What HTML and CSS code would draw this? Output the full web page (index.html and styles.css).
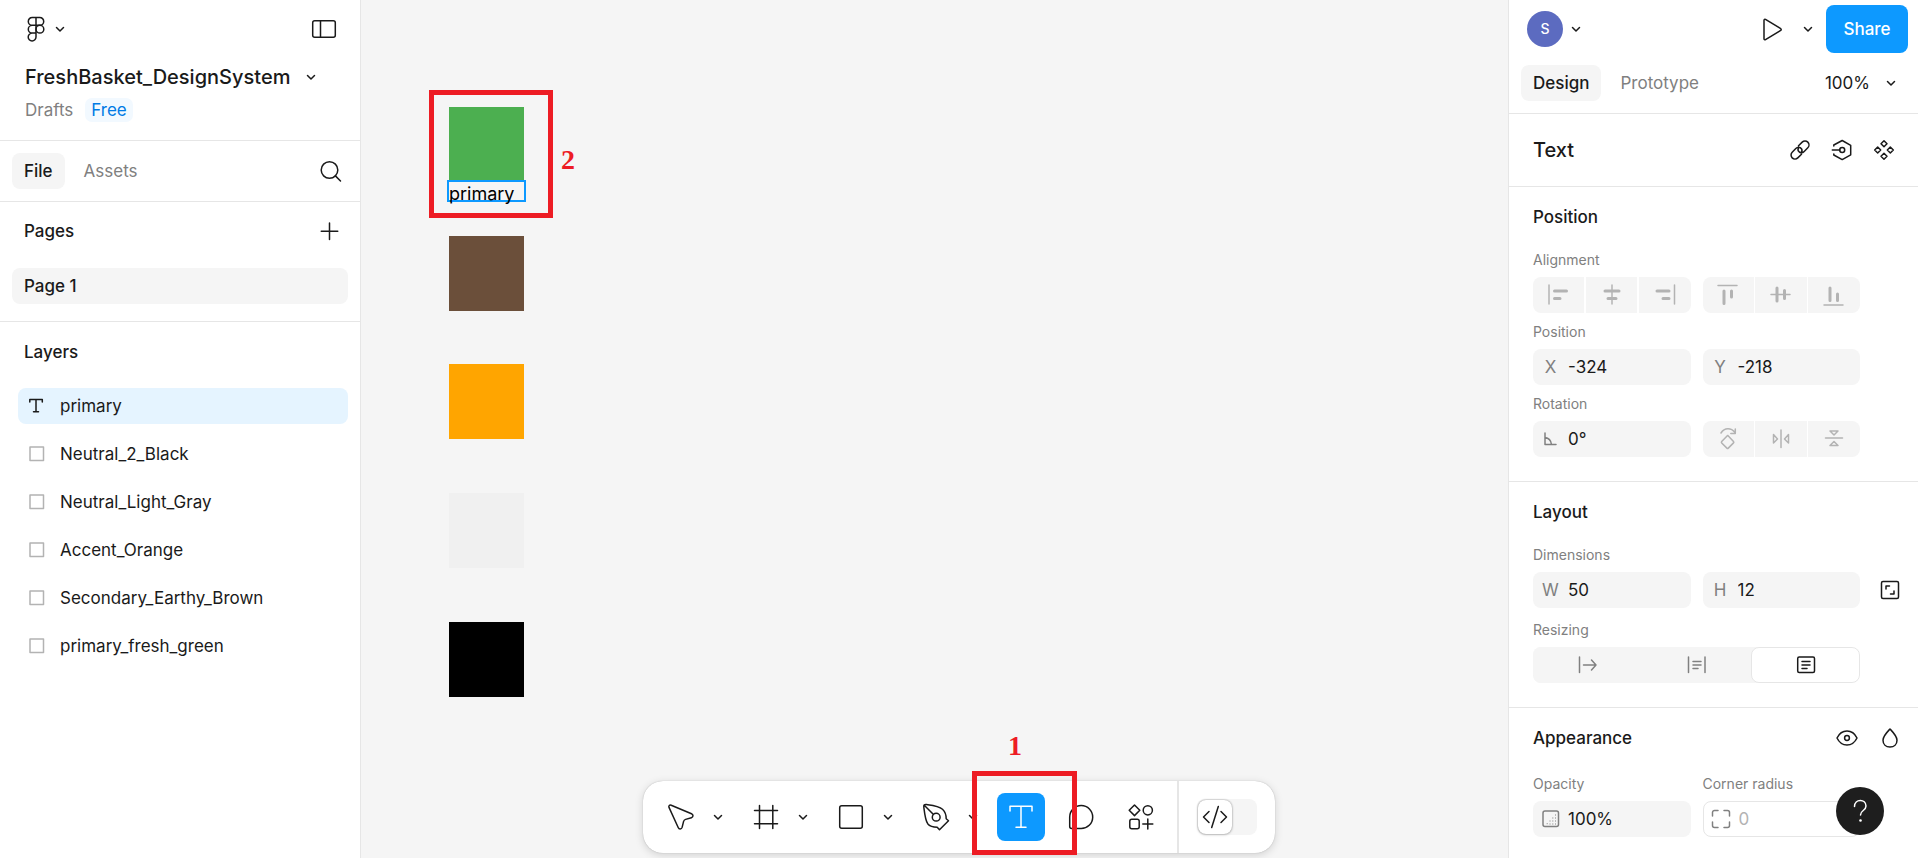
FILE: index.html
```html
<!DOCTYPE html>
<html lang="en">
<head>
<meta charset="utf-8">
<title>FreshBasket_DesignSystem</title>
<link rel="stylesheet" href="styles.css">
</head>
<body>
<svg class="defs" aria-hidden="true">
  <symbol id="chevron" viewBox="0 0 12 12"><path d="M2.5 4.5 6 8l3.500-3.500"/></symbol>
  <symbol id="square" viewBox="0 0 16 16"><rect x="1" y="1" width="13.500" height="13.500"/></symbol>
</svg>
<div class="app">
  <aside class="left">
    <header class="file-head">
      <div class="row top">
        <button class="plain menu" aria-label="Main menu">
          <svg class="icon i28" viewBox="0 0 28 28"><path d="M14 2.500h-3.800a3.900 3.900 0 0 0 0 7.800H14zM14 2.500h3.800a3.900 3.900 0 0 1 0 7.800H14zM14 10.300h-3.800a3.900 3.900 0 0 0 0 7.800H14zM14 18.100h-3.800a3.900 3.900 0 1 0 3.800 3.900z"/><circle cx="17.900" cy="14.200" r="3.900"/></svg>
          <svg class="icon i12"><use href="#chevron"/></svg>
        </button>
        <button class="plain" aria-label="Minimize UI">
          <svg class="icon i28" viewBox="0 0 28 28"><rect x="2.700" y="5.700" width="22.600" height="16.600" rx="2"/><path d="M10.500 5.700v16.600"/></svg>
        </button>
      </div>
      <button class="plain title"><span>FreshBasket_DesignSystem</span><svg class="icon i12"><use href="#chevron"/></svg></button>
      <div class="row crumbs"><a class="muted" href="#">Drafts</a><a class="free" href="#">Free</a></div>
    </header>
    <nav class="row tabs">
      <button class="tab on">File</button><button class="tab">Assets</button>
      <button class="plain end" aria-label="Find"><svg class="icon i28" viewBox="0 0 28 28"><circle cx="12.500" cy="13" r="8.300"/><path d="m18.400 18.900 5.100 5.100"/></svg></button>
    </nav>
    <section class="pages">
      <div class="row pages-head"><h2>Pages</h2><button class="plain end" aria-label="Add page"><svg class="icon i28" viewBox="0 0 28 28"><path d="M12.500 6v16.500M4.250 14.250h16.500"/></svg></button></div>
      <button class="page">Page 1</button>
    </section>
    <section class="layers">
      <h2>Layers</h2>
      <ul>
        <li><button class="layer on"><svg class="icon i16" viewBox="0 0 16 16"><path d="M.8 4V1.500h12.500V4M7 1.500v12.300M4.500 13.800h5"/></svg>primary</button></li>
        <li><button class="layer"><svg class="icon i16"><use href="#square"/></svg>Neutral_2_Black</button></li>
        <li><button class="layer"><svg class="icon i16"><use href="#square"/></svg>Neutral_Light_Gray</button></li>
        <li><button class="layer"><svg class="icon i16"><use href="#square"/></svg>Accent_Orange</button></li>
        <li><button class="layer"><svg class="icon i16"><use href="#square"/></svg>Secondary_Earthy_Brown</button></li>
        <li><button class="layer"><svg class="icon i16"><use href="#square"/></svg>primary_fresh_green</button></li>
      </ul>
    </section>
  </aside>

  <main class="canvas">
    <div class="swatch green"></div>
    <div class="swatch brown"></div>
    <div class="swatch orange"></div>
    <div class="swatch gray"></div>
    <div class="swatch black"></div>
    <div class="text-node">primary</div>
    <div class="mark mark-two"></div>
    <div class="num num-two">2</div>
  </main>

  <aside class="right">
    <header class="share-head">
      <div class="row share-row">
        <button class="plain user" aria-label="Account"><span class="avatar">S</span><svg class="icon i12"><use href="#chevron"/></svg></button>
        <button class="plain play" aria-label="Present"><svg class="icon i28" viewBox="0 0 28 28"><path d="M6 5.200v18.600c0 .8.800 1.300 1.500.9l15.200-9.300c.7-.4.7-1.400 0-1.800L7.500 4.300c-.7-.4-1.500.1-1.500.9z"/></svg></button>
        <button class="plain present-menu" aria-label="Present options"><svg class="icon i12"><use href="#chevron"/></svg></button>
        <button class="share">Share</button>
      </div>
      <div class="row mode-row">
        <button class="tab on">Design</button><button class="tab">Prototype</button>
        <button class="plain zoom end">100%<svg class="icon i12"><use href="#chevron"/></svg></button>
      </div>
    </header>
    <div class="row kind">
      <h1>Text</h1>
      <button class="plain end" aria-label="Link"><svg class="icon i24" viewBox="0 0 24 24"><path d="m10.500 7.700 3.700-3.600a3.900 3.900 0 0 1 5.600 5.600l-3.600 3.700a3.900 3.900 0 0 1-4.900.6M13.500 16.300l-3.700 3.600a3.900 3.900 0 0 1-5.600-5.600l3.600-3.700a3.900 3.900 0 0 1 4.900-.6M12.700 10c1.300 1 1.600 2.700.8 4.100M11.300 14c-1.300-1-1.600-2.700-.8-4.100"/></svg></button>
      <button class="plain" aria-label="Apply variable mode"><svg class="icon i24" viewBox="0 0 24 24"><path d="M3.800 8V7L12.200 2.500l8.500 4.800v9.500l-8.500 4.800L3.800 17v-1M2.300 12h7.500"/><circle cx="12.200" cy="12" r="2.500"/></svg></button>
      <button class="plain" aria-label="Create component"><svg class="icon i24" viewBox="0 0 24 24"><path d="m12 2.700 3 3-3 3-3-3zM12 15.300l3 3-3 3-3-3zM5.700 9l3 3-3 3-3-3zM18.300 9l3 3-3 3-3-3z"/></svg></button>
    </div>

    <section class="panel">
      <h2>Position</h2>
      <div class="grid">
        <div class="field wide"><span class="cap">Alignment</span>
          <div class="pair">
            <div class="seg spaced">
              <button aria-label="Align left"><svg class="icon i24" viewBox="0 0 24 24"><path d="M2 2v19"/><path class="fat" d="M7.500 8h12M7.500 15.500H13"/></svg></button>
              <button aria-label="Align horizontal centers"><svg class="icon i24" viewBox="0 0 24 24"><path d="M12 2v19"/><path class="fat" d="M5 8h14M8 15.500h8"/></svg></button>
              <button aria-label="Align right"><svg class="icon i24" viewBox="0 0 24 24"><path d="M21.500 2v19"/><path class="fat" d="M4 8h12M10 15.500h6"/></svg></button>
            </div>
            <div class="seg">
              <button aria-label="Align top"><svg class="icon i24" viewBox="0 0 24 24"><path d="M2 2.500h19"/><path class="fat" d="M8 8v12.500M15.500 8v6"/></svg></button>
              <button aria-label="Align vertical centers"><svg class="icon i24" viewBox="0 0 24 24"><path d="M2 11.500h19"/><path class="fat" d="M8 5v13M15.500 7.500v8"/></svg></button>
              <button aria-label="Align bottom"><svg class="icon i24" viewBox="0 0 24 24"><path d="M2 22h19"/><path class="fat" d="M8 5v12.500M15.500 11v6.500"/></svg></button>
            </div>
          </div>
        </div>
        <div class="field wide"><span class="cap">Position</span>
          <div class="pair">
            <label class="input"><span>X</span><input type="text" value="-324"></label>
            <label class="input"><span>Y</span><input type="text" value="-218"></label>
          </div>
        </div>
        <div class="field wide"><span class="cap">Rotation</span>
          <div class="pair">
            <label class="input"><span><svg class="icon i16" viewBox="0 0 16 16"><path d="M2 2v11.500h11M2 6.500c4 .5 6 3 6.500 7"/></svg></span><input type="text" value="0°" aria-label="Rotation"></label>
            <div class="seg">
              <button aria-label="Rotate 90° right"><svg class="icon i24" viewBox="0 0 24 24"><path d="m11.300 8.700-5.600 5.800a1 1 0 0 0 0 1.400l5.200 5.200a1 1 0 0 0 1.400 0l5.200-5.200a1 1 0 0 0 0-1.400l-5.200-5.600a.7.700 0 0 0-1-.2zM5 6c3.500-5.500 10-5.500 14-.5M19.300 2v4.500h-4.500"/></svg></button>
              <button aria-label="Flip horizontal"><svg class="icon i24" viewBox="0 0 24 24"><path d="M12 3v17.500M4.500 7.500v8.500L8.500 12zM19.500 7.500v8.500l-4-4z"/></svg></button>
              <button aria-label="Flip vertical"><svg class="icon i24" viewBox="0 0 24 24"><path d="M3.500 11h17M8 4h8l-4 4zM8 18.500h8l-4-4z"/></svg></button>
            </div>
          </div>
        </div>
      </div>
    </section>

    <section class="panel">
      <h2>Layout</h2>
      <div class="grid roomy">
        <div class="field wide"><span class="cap">Dimensions</span>
          <div class="pair">
            <label class="input"><span>W</span><input type="text" value="50"></label>
            <label class="input"><span>H</span><input type="text" value="12"></label>
          </div>
        </div>
        <button class="plain side" aria-label="Lock aspect ratio"><svg class="icon i24" viewBox="0 0 24 24"><rect x="3.500" y="3.500" width="17" height="17" rx="1.500"/><path d="M8 11V8h3.500M16 13v3h-3.500"/></svg></button>
        <div class="field wide"><span class="cap">Resizing</span>
          <div class="resize">
            <button aria-label="Auto width"><svg class="icon i24" viewBox="0 0 24 24"><path d="M3.500 4v15.500M7.500 12H20M15.500 7l4.500 5-4.500 5"/></svg></button>
            <button aria-label="Auto height"><svg class="icon i24" viewBox="0 0 24 24"><path d="M3.500 4v15.500M20 4v15.500M8 8.500h8M8 12h8M8 15.500h5"/></svg></button>
            <button class="on" aria-label="Fixed size"><svg class="icon i24" viewBox="0 0 24 24"><rect x="3.700" y="4" width="16.800" height="15.500" rx="1.500"/><path d="M8 8.500h8M8 12h8M8 15.500h5"/></svg></button>
          </div>
        </div>
      </div>
    </section>

    <section class="panel last">
      <div class="row panel-head"><h2>Appearance</h2>
        <button class="plain end" aria-label="Toggle visibility"><svg class="icon i24" viewBox="0 0 24 24"><path d="M2 12c4.500-9.300 15.500-9.300 20 0-4.500 9.300-15.500 9.300-20 0z"/><circle cx="12" cy="12" r="2.400"/></svg></button>
        <button class="plain" aria-label="Blend mode"><svg class="icon i24" viewBox="0 0 24 24"><path d="M12 3c3 3.200 7 7 7 11.200C19 18.500 16 21 12 21s-7-2.500-7-6.800C5 10 9 6.200 12 3z"/></svg></button>
      </div>
      <div class="grid">
        <div class="field"><label class="cap" for="opacity">Opacity</label>
          <div class="input"><span><svg class="icon i20" viewBox="0 0 20 20"><rect x="2" y="2" width="15.500" height="15.500" rx="2"/><path class="dots" d="M14.500 5.500v10M11.800 8.500v7M9 11.500v4M6.200 14.200v1.300"/></svg></span><input id="opacity" type="text" value="100%"></div>
        </div>
        <div class="field"><label class="cap" for="radius">Corner radius</label>
          <div class="input line"><span><svg class="icon i20" viewBox="0 0 20 20"><path d="M1.500 7V3.500a2 2 0 0 1 2-2H7M13 1.500h3.500a2 2 0 0 1 2 2V7M18.500 13v3.500a2 2 0 0 1-2 2H13M7 18.500H3.500a2 2 0 0 1-2-2V13"/></svg></span><input id="radius" type="text" value="0"></div>
        </div>
      </div>
    </section>
    <button class="help" aria-label="Help"><svg class="icon i24" viewBox="0 0 24 24"><path d="M6.500 7.500c0-8 11.500-8 11.500-.5 0 5-5.500 4-5.500 9"/><circle class="dot" cx="12.500" cy="21.500" r="1.300"/></svg></button>
  </aside>

  <div class="dock">
    <div class="toolbar">
      <button class="tool" aria-label="Move"><svg class="icon i28" viewBox="0 0 28 28"><path d="M2 4.400C1.400 2.800 2.600 1.600 4.200 2.200l20.300 8.600c2 .9 2 3.300-.1 3.900l-5.800 1.700c-1 .3-1.700 1-2 2l-1.500 6c-.6 2-3.100 2.100-3.900.1z"/></svg></button>
      <button class="drop" aria-label="Move options"><svg class="icon i12"><use href="#chevron"/></svg></button>
      <button class="tool" aria-label="Frame"><svg class="icon i28" viewBox="0 0 28 28"><path d="M7.500 2.500v23M20.800 2.500v23M2.500 7.500h23M2.500 20.800h23"/></svg></button>
      <button class="drop" aria-label="Frame options"><svg class="icon i12"><use href="#chevron"/></svg></button>
      <button class="tool" aria-label="Rectangle"><svg class="icon i28" viewBox="0 0 28 28"><rect x="2.700" y="2.700" width="22.600" height="22.600" rx="2"/></svg></button>
      <button class="drop" aria-label="Shape options"><svg class="icon i12"><use href="#chevron"/></svg></button>
      <button class="tool" aria-label="Pen"><svg class="icon i28" viewBox="0 0 28 28"><path d="M1.800 4C1.500 2 2.500 1.200 4.500 1.500 12 2.500 17 3 20.500 6.200c3.200 3 3.700 6 3.700 9.500l2.300 2-9 9-2.300-2.500c-4 0-7.200-.7-9.500-3.500C3.200 17 2.800 12 1.800 4zM3 3l8.500 8.500"/><circle cx="14.200" cy="14.200" r="3.900"/></svg></button>
      <button class="drop" aria-label="Pen options"><svg class="icon i12"><use href="#chevron"/></svg></button>
      <button class="tool on" aria-label="Text"><svg class="icon i28" viewBox="0 0 28 28"><path d="M3 8V3.300h22V8M14 3.300v20.900M9 24.200h10"/></svg></button>
      <button class="tool" aria-label="Comment"><svg class="icon i28" viewBox="0 0 28 28"><path d="M2.700 23.500V14A11.500 11.500 0 1 1 14 25.500H4.700a2 2 0 0 1-2-2z"/></svg></button>
      <button class="tool" aria-label="Actions"><svg class="icon i28" viewBox="0 0 28 28"><path d="m7.500 2 5.300 5.300-5.300 5.300-5.300-5.300zM20.800 16v10M15.800 21h10"/><circle cx="20.800" cy="7.300" r="4.600"/><rect x="2.800" y="16.300" width="9.400" height="9.400" rx="2"/></svg></button>
      <label class="dev"><input type="checkbox" aria-label="Dev Mode"><span class="knob"><svg class="icon i28" viewBox="0 0 28 28"><path d="M8 8.500 2.500 14 8 19.500M20 8.500l5.500 5.500-5.500 5.500M17.300 3.500l-6.600 21"/></svg></span></label>
    </div>
    <div class="mark mark-one"></div>
    <div class="num num-one">1</div>
  </div>
</div>
</body>
</html>
```
FILE: styles.css
```css
* { box-sizing: border-box; }

body {
  margin: 0;
  font: 400 17px/24px Inter, "Liberation Sans", sans-serif;
  color: #1a1a1a;
}

button, input { font: inherit; color: inherit; }
button { border: 0; padding: 0; background: none; }
a { text-decoration: none; }
ul { list-style: none; margin: 0; padding: 0; }
h1, h2 { margin: 0; font-weight: 500; }
h1 { font-size: 20px; }
h2 { font-size: 17px; }

.defs { position: absolute; width: 0; height: 0; }
.icon { display: block; flex: none; fill: none; stroke: currentColor; stroke-width: 1.500; stroke-linejoin: round; stroke-linecap: round; }
.i12 { width: 12px; height: 12px; }
.i16 { width: 16px; height: 16px; }
.i20 { width: 20px; height: 20px; }
.i24 { width: 24px; height: 24px; }
.i28 { width: 28px; height: 28px; }
.fat { stroke-width: 3; }
.dots { stroke-width: 1; stroke-dasharray: 1 2; stroke-linecap: butt; }

.row, .plain { display: flex; align-items: center; }
.end { margin-left: auto; }
.muted { color: #808080; }

.app {
  position: relative;
  display: grid;
  grid-template-columns: 361px 1fr 410px;
  grid-template-rows: 100vh;
  height: 100vh;
  overflow: hidden;
}

/* Left panel */
.left { border-right: 1px solid #e6e6e6; background: #fff; }
.file-head { height: 141px; padding: 8px 22px 0 25px; border-bottom: 1px solid #e6e6e6; }
.top { height: 42px; justify-content: space-between; }
.menu { gap: 4px; margin-left: -3px; }
.title { height: 54px; gap: 15px; font-size: 20px; font-weight: 500; margin-bottom: -6px; }
.crumbs { gap: 12px; }
.free { padding: 0 6px; border-radius: 7px; background: #f2f9ff; color: #007be5; }
.tabs { height: 61px; padding: 0 15px 0 12px; border-bottom: 1px solid #e6e6e6; }
.tab { height: 36px; padding: 0 12px; border-radius: 8px; color: #808080; }
.tab.on { background: #f5f5f5; color: #1a1a1a; font-weight: 500; }
.tab + .tab { margin-left: 7px; }
.pages { height: 120px; padding: 0 12px; border-bottom: 1px solid #e6e6e6; }
.pages-head { height: 58px; padding: 0 3px 0 12px; }
.page { width: 100%; height: 36px; margin-top: 8px; padding: 0 12px; border-radius: 8px; background: #f5f5f5; font-weight: 500; text-align: left; }
.layers { padding: 18px 12px 0 18px; }
.layers h2 { margin: 0 0 24px 6px; }
.layers ul { display: grid; gap: 12px; }
.layer { display: flex; align-items: center; gap: 15px; width: 100%; height: 36px; padding: 0 11px; border-radius: 8px; }
.layer .icon { color: #b3b3b3; }
.layer.on { background: #e5f4ff; }
.layer.on .icon { color: #1a1a1a; }

/* Canvas */
.canvas { position: relative; background: #f5f5f5; }
.swatch { position: absolute; left: 88px; width: 75px; height: 75px; }
.green { top: 107px; background: #4caf50; }
.brown { top: 236px; background: #6b4f3a; }
.orange { top: 364px; background: #ffa500; }
.gray { top: 493px; background: #f0f0f0; }
.black { top: 622px; background: #000; }
.text-node { position: absolute; left: 86px; top: 180px; width: 79px; height: 22px; border: 2px solid #0d99ff; font-size: 18px; line-height: 24px; color: #000; white-space: nowrap; }
.mark { position: absolute; border: 5px solid #ed1c24; }
.mark-two { left: 68px; top: 90px; width: 124px; height: 128px; }
.num { position: absolute; font: 700 28px/32px "Liberation Serif", serif; color: #ed1c24; }
.num-two { left: 200px; top: 144px; }

/* Toolbar */
.dock { position: absolute; left: 50%; bottom: 5px; transform: translateX(-50%); }
.toolbar { display: flex; align-items: center; width: max-content; height: 72px; padding: 0 18px 0 14px; border-radius: 20px; background: #fff; box-shadow: 0 0 1px rgba(0, 0, 0, .3), 0 2px 8px rgba(0, 0, 0, .15); }
.tool, .drop { display: grid; place-items: center; height: 48px; border-radius: 8px; }
.tool { width: 48px; margin-right: 12px; }
.drop { width: 25px; margin-left: -12px; margin-right: 12px; }
.tool.on { background: #0d99ff; color: #fff; }
.dev { position: relative; display: flex; width: 60px; height: 36px; margin-left: 20px; border-radius: 8px; background: #f5f5f5; }
.dev::before { content: ""; position: absolute; left: -20px; top: -18px; width: 2px; height: 72px; background: #e6e6e6; }
.dev input { position: absolute; inset: 0; margin: 0; opacity: 0; }
.knob { display: grid; place-items: center; width: 34px; height: 34px; margin: 1px; border-radius: 8px; background: #fff; box-shadow: 0 0 2px rgba(0, 0, 0, .4), 0 1px 3px rgba(0, 0, 0, .15); }
.mark-one { left: 329px; top: -10px; width: 105px; height: 84px; }
.num-one { left: 365px; top: -51px; }

/* Right panel */
.right { position: relative; border-left: 1px solid #e6e6e6; background: #fff; }
.share-head { height: 114px; padding: 5px 10px 0 12px; border-bottom: 1px solid #e6e6e6; }
.share-row { height: 48px; }
.user { gap: 7px; margin-left: 6px; margin-right: auto; }
.avatar { width: 36px; height: 36px; border-radius: 50%; background: #5c6bc0; color: #fff; font-size: 14px; font-weight: 500; line-height: 36px; text-align: center; }
.present-menu { margin: 0 12px 0 16px; }
.share { width: 82px; height: 48px; border-radius: 8px; background: #0d99ff; color: #fff; font-weight: 500; }
.mode-row { height: 60px; }
.zoom { gap: 15px; margin-right: 11px; }
.kind { height: 73px; padding: 0 22px 0 24px; gap: 18px; border-bottom: 1px solid #e6e6e6; }
.panel { padding: 0 10px 24px 24px; border-bottom: 1px solid #e6e6e6; }
.panel h2 { line-height: 60px; }
.grid { display: grid; grid-template-columns: 1fr 1fr 36px; gap: 10px 12px; padding-top: 4px; }
.roomy { row-gap: 13px; }
.last { border-bottom: 0; }
.last .grid { padding-top: 7px; }
.panel-head { height: 60px; gap: 19px; padding-right: 6px; }
.field { display: grid; gap: 8px; }
.wide { grid-column: span 2; }
.cap { font-size: 14px; line-height: 18px; color: #808080; }
.pair { display: grid; grid-template-columns: 1fr 1fr; gap: 12px; }
.seg { display: grid; grid-template-columns: repeat(3, 1fr); gap: 1px; height: 36px; border-radius: 8px; overflow: hidden; color: #b3b3b3; }
.spaced { gap: 2px; }
.seg button, .resize button { display: grid; place-items: center; background: #f5f5f5; }
.input { display: flex; align-items: center; height: 36px; border-radius: 8px; background: #f5f5f5; overflow: hidden; }
.input span { display: grid; place-items: center; width: 35px; flex: none; color: #808080; }
.input input { flex: 1; min-width: 0; padding: 0; border: 0; outline: 0; background: none; }
.line { border: 1px solid #e6e6e6; background: #fff; }
.line input { color: #b3b3b3; }
.side { align-self: end; justify-content: center; height: 36px; }
.resize { display: grid; grid-template-columns: repeat(3, 1fr); height: 36px; border-radius: 8px; background: #f5f5f5; color: #808080; overflow: hidden; }
.resize .on { border: 1px solid #e6e6e6; border-radius: 8px; background: #fff; color: #1a1a1a; }
.help { position: absolute; right: 34px; bottom: 23px; display: grid; place-items: center; width: 48px; height: 48px; border-radius: 50%; background: #1e1e1e; color: #fff; }
.dot { fill: currentColor; stroke: none; }
```
